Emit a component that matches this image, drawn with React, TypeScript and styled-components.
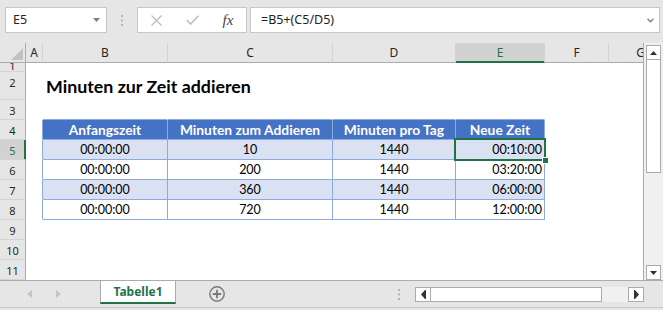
import React from 'react';
import styled, { createGlobalStyle } from 'styled-components';

const GREEN = '#217346';
const LINE = '#ababab';
const SOFT_LINE = '#d4d4d4';
const CHROME = '#e6e6e6';
const ACTIVE_HEAD = '#d2d2d2';
const TABLE_LINE = '#8ea9db';
const TABLE_HEAD = '#4472c4';
const TABLE_BAND = '#d9e1f2';

const COLUMNS = [
  { name: 'A', width: 17 },
  { name: 'B', width: 125 },
  { name: 'C', width: 165 },
  { name: 'D', width: 123 },
  { name: 'E', width: 89 },
  { name: 'F', width: 64 },
  { name: 'G', width: 64 },
];

const HEADINGS = ['Anfangszeit', 'Minuten zum Addieren', 'Minuten pro Tag', 'Neue Zeit'];

const DATA = [
  ['00:00:00', '10', '1440', '00:10:00'],
  ['00:00:00', '200', '1440', '03:20:00'],
  ['00:00:00', '360', '1440', '06:00:00'],
  ['00:00:00', '720', '1440', '12:00:00'],
];

const ROWS = [1, 2, 3, 4, 5, 6, 7, 8, 9, 10, 11].map(n => ({
  n,
  height: n === 1 ? 9 : n === 2 ? 28 : 20,
}));

type Kind = 'blank' | 'head' | 'band' | 'plain';

const inTable = (n: number) => n >= 4 && n <= 8;

function cellKind(n: number, col: number): Kind {
  if (col < 1 || col > 4 || !inTable(n)) return 'blank';
  if (n === 4) return 'head';
  return n % 2 === 1 ? 'band' : 'plain';
}

const GlobalStyle = createGlobalStyle`
  html, body {
    margin: 0;
    padding: 0;
    background: ${CHROME};
  }

  body {
    font-family: 'Noto Sans', sans-serif;
  }
`;

export default function App() {
  return (
    <>
      <GlobalStyle />
      <Frame>
        <FormulaBar>
          <NameBox>
            <span>E5</span>
            <svg width="7" height="4" viewBox="0 0 7 4">
              <path d="M0 0h7L3.5 4z" fill="#7f7f7f" />
            </svg>
          </NameBox>
          <Grip>
            <svg width="2" height="11" viewBox="0 0 2 11" fill="#b4b4b4">
              <rect x="0" y="0" width="2" height="2" />
              <rect x="0" y="4.5" width="2" height="2" />
              <rect x="0" y="9" width="2" height="2" />
            </svg>
          </Grip>
          <FxBox>
            <FxSlot>
              <svg width="11" height="11" viewBox="0 0 11 11" stroke="#bdbdbd" strokeWidth="1.3">
                <path d="M0.5 0.5l10 10M10.5 0.5l-10 10" />
              </svg>
            </FxSlot>
            <FxSlot>
              <svg width="13" height="10" viewBox="0 0 13 10" fill="none" stroke="#bdbdbd" strokeWidth="1.6">
                <path d="M0.6 5l4 4L12.4 0.8" />
              </svg>
            </FxSlot>
            <FxSlot>
              <FxGlyph>fx</FxGlyph>
            </FxSlot>
          </FxBox>
          <FormulaInput>
            <span>=B5+(C5/D5)</span>
            <svg width="7" height="5" viewBox="0 0 7 5" fill="none" stroke="#7f7f7f" strokeWidth="1.4">
              <path d="M0.5 0.8l3 3 3-3" />
            </svg>
          </FormulaInput>
        </FormulaBar>

        <Workspace>
          <Sheet>
            <HeaderRow>
              <Corner>
                <svg width="12" height="12" viewBox="0 0 12 12">
                  <path d="M12 0v12H0z" fill="#c2c2c2" />
                </svg>
              </Corner>
              {COLUMNS.map(c => (
                <ColHead key={c.name} $w={c.width} $active={c.name === 'E'}>
                  {c.name}
                </ColHead>
              ))}
            </HeaderRow>

            {ROWS.map(row => (
              <SheetRow key={row.n} $h={row.height}>
                <RowHead $active={row.n === 5}>
                  <RowLabel $clipped={row.n === 1}>{row.n}</RowLabel>
                </RowHead>
                {COLUMNS.map((c, ci) => {
                  const kind = cellKind(row.n, ci);
                  const right =
                    kind !== 'blank' || (ci === 0 && inTable(row.n)) ? TABLE_LINE : 'transparent';
                  const bottom =
                    kind !== 'blank' || (row.n === 3 && ci >= 1 && ci <= 4)
                      ? TABLE_LINE
                      : 'transparent';
                  const isData = kind === 'band' || kind === 'plain';
                  const isTitle = row.n === 2 && ci === 1;
                  const selected = row.n === 5 && c.name === 'E';
                  let align = 'center';
                  if (isTitle) align = 'flex-start';
                  if (isData && ci === 4) align = 'flex-end';

                  return (
                    <Cell
                      key={c.name}
                      $w={c.width}
                      $h={row.height}
                      $kind={kind}
                      $right={right}
                      $bottom={bottom}
                      $align={align}
                    >
                      {isTitle && <Title>Minuten zur Zeit addieren</Title>}
                      {kind === 'head' && <span>{HEADINGS[ci - 1]}</span>}
                      {isData && <span>{DATA[row.n - 5][ci - 1]}</span>}
                      {selected && (
                        <Selection>
                          <Handle />
                        </Selection>
                      )}
                    </Cell>
                  );
                })}
              </SheetRow>
            ))}
          </Sheet>

          <VScroll>
            <ScrollButton>
              <svg width="7" height="4" viewBox="0 0 7 4">
                <path d="M0 4h7L3.5 0z" fill="#333" />
              </svg>
            </ScrollButton>
            <VThumb />
            <ScrollTrack />
            <ScrollButton>
              <svg width="7" height="4" viewBox="0 0 7 4">
                <path d="M0 0h7L3.5 4z" fill="#333" />
              </svg>
            </ScrollButton>
          </VScroll>
        </Workspace>

        <TabBar>
          <SheetNav>
            <svg width="5" height="8" viewBox="0 0 5 8">
              <path d="M5 0v8L0 4z" fill="#c4c4c4" />
            </svg>
            <svg width="5" height="8" viewBox="0 0 5 8">
              <path d="M0 0v8l5-4z" fill="#c4c4c4" />
            </svg>
          </SheetNav>
          <SheetTab>Tabelle1</SheetTab>
          <AddSheet>
            <svg width="16" height="16" viewBox="0 0 16 16" fill="none" stroke="#7a7a7a" strokeWidth="1.4">
              <circle cx="8" cy="8" r="7.2" />
              <path d="M8 3.8v8.4M3.8 8h8.4" strokeWidth="1.8" />
            </svg>
          </AddSheet>
          <TabSpacer />
          <TabGrip>
            <svg width="2" height="11" viewBox="0 0 2 11" fill="#b4b4b4">
              <rect x="0" y="0" width="2" height="2" />
              <rect x="0" y="4.5" width="2" height="2" />
              <rect x="0" y="9" width="2" height="2" />
            </svg>
          </TabGrip>
          <HScroll>
            <HButton>
              <svg width="5" height="9" viewBox="0 0 5 9">
                <path d="M4 0v9L0 4.5z" fill="#333" />
                <rect x="4" y="0" width="1" height="9" fill="#333" />
              </svg>
            </HButton>
            <HThumb />
            <ScrollTrack />
            <HButton>
              <svg width="5" height="9" viewBox="0 0 5 9">
                <path d="M1 0v9l4-4.5z" fill="#333" />
                <rect x="0" y="0" width="1" height="9" fill="#333" />
              </svg>
            </HButton>
          </HScroll>
        </TabBar>
      </Frame>
    </>
  );
}

const Frame = styled.div`
  width: 663px;
  height: 310px;
  display: flex;
  flex-direction: column;
  overflow: hidden;
  background: ${CHROME};
  font-family: 'Noto Sans', sans-serif;
  color: #262626;
`;

/* formula bar */

const FormulaBar = styled.div`
  flex: none;
  height: 43px;
  box-sizing: border-box;
  padding: 7px 3px 0 5px;
  display: flex;
  align-items: flex-start;
`;

const Field = styled.div`
  height: 26px;
  box-sizing: border-box;
  display: flex;
  align-items: center;
  background: #fff;
  border: 1px solid #c6c6c6;
  font-size: 12.5px;
  line-height: 24px;
  color: #222;
`;

const NameBox = styled(Field)`
  width: 102px;
  padding: 0 6px 0 7px;
  justify-content: space-between;
`;

const Grip = styled.div`
  width: 30px;
  height: 26px;
  display: flex;
  align-items: center;
  justify-content: center;
`;

const FxBox = styled(Field)`
  width: 110px;
`;

const FxSlot = styled.div`
  width: 36px;
  height: 100%;
  display: flex;
  align-items: center;
  justify-content: center;
`;

const FxGlyph = styled.span`
  font-family: 'Liberation Serif', serif;
  font-style: italic;
  font-size: 15px;
  color: #444;
`;

const FormulaInput = styled(Field)`
  flex: 1;
  margin-left: 3px;
  padding: 0 5px 0 10px;
  justify-content: space-between;
`;

/* sheet */

const Workspace = styled.div`
  flex: none;
  height: 237px;
  display: flex;
`;

const Sheet = styled.div`
  width: 644px;
  box-sizing: border-box;
  border-right: 1px solid ${LINE};
  overflow: hidden;
  background: #fff;
`;

const HeaderRow = styled.div`
  display: flex;
  height: 20px;
`;

const Corner = styled.div`
  flex: none;
  width: 26px;
  box-sizing: border-box;
  padding: 0 2px 2px 0;
  display: flex;
  justify-content: flex-end;
  align-items: flex-end;
  background: ${CHROME};
  border-right: 1px solid ${LINE};
  border-bottom: 1px solid ${LINE};
`;

const ColHead = styled.div<{ $w: number; $active?: boolean }>`
  flex: none;
  width: ${p => p.$w}px;
  box-sizing: border-box;
  background: ${p => (p.$active ? ACTIVE_HEAD : CHROME)};
  border-right: 1px solid ${SOFT_LINE};
  border-bottom: 1px solid ${p => (p.$active ? GREEN : LINE)};
  box-shadow: ${p => (p.$active ? `inset 0 -1px 0 ${GREEN}` : 'none')};
  color: ${p => (p.$active ? GREEN : '#262626')};
  font-size: 12px;
  line-height: 19px;
  text-align: center;
`;

const SheetRow = styled.div<{ $h: number }>`
  display: flex;
  height: ${p => p.$h}px;
`;

const RowHead = styled.div<{ $active?: boolean }>`
  flex: none;
  width: 26px;
  box-sizing: border-box;
  overflow: hidden;
  background: ${p => (p.$active ? ACTIVE_HEAD : CHROME)};
  border-right: 1px solid ${p => (p.$active ? GREEN : LINE)};
  border-bottom: 1px solid ${SOFT_LINE};
  box-shadow: ${p => (p.$active ? `inset -1px 0 0 ${GREEN}` : 'none')};
  color: ${p => (p.$active ? GREEN : '#262626')};
  font-size: 11px;
  text-align: center;
`;

const RowLabel = styled.div<{ $clipped?: boolean }>`
  padding-top: 2px;
  margin-top: ${p => (p.$clipped ? -8 : 0)}px;
  line-height: 17px;
`;

const Cell = styled.div<{
  $w: number;
  $h: number;
  $kind: Kind;
  $right: string;
  $bottom: string;
  $align: string;
}>`
  flex: none;
  position: relative;
  width: ${p => p.$w}px;
  height: ${p => p.$h}px;
  box-sizing: border-box;
  padding: 0 2px;
  display: flex;
  justify-content: ${p => p.$align};
  align-items: flex-end;
  border-right: 1px solid ${p => p.$right};
  border-bottom: 1px solid ${p => p.$bottom};
  background: ${p =>
    p.$kind === 'head' ? TABLE_HEAD : p.$kind === 'band' ? TABLE_BAND : p.$kind === 'plain' ? '#fff' : 'transparent'};
  color: ${p => (p.$kind === 'head' ? '#fff' : '#000')};
  font-family: Lato, 'Liberation Sans', sans-serif;
  font-size: ${p => (p.$kind === 'head' ? 13.8 : 12.5)}px;
  font-weight: ${p => (p.$kind === 'head' ? 700 : 400)};
  line-height: ${p => p.$h - 1}px;
  white-space: nowrap;
`;

const Title = styled.span`
  padding: 0 0 2px 1px;
  font-size: 17.8px;
  font-weight: 700;
  line-height: 21px;
`;

const Selection = styled.div`
  position: absolute;
  left: -2px;
  top: -2px;
  z-index: 2;
  width: 92px;
  height: 23px;
  box-sizing: border-box;
  border: 2px solid ${GREEN};
`;

const Handle = styled.div`
  position: absolute;
  left: 86px;
  top: 17px;
  width: 7px;
  height: 7px;
  box-sizing: border-box;
  background: ${GREEN};
  border: 1px solid #fff;
`;

/* scrollbars */

const VScroll = styled.div`
  flex: none;
  width: 19px;
  box-sizing: border-box;
  padding: 2px 2px 0;
  display: flex;
  flex-direction: column;
  background: #f0f0f0;
`;

const ScrollButton = styled.div`
  flex: none;
  width: 15px;
  height: 15px;
  box-sizing: border-box;
  display: flex;
  align-items: center;
  justify-content: center;
  background: #fff;
  border: 1px solid ${LINE};
`;

const VThumb = styled.div`
  flex: none;
  height: 112px;
  background: #fff;
  border: 1px solid ${LINE};
  border-top: none;
`;

const ScrollTrack = styled.div`
  flex: 1;
  background: #f0f0f0;
`;

const HScroll = styled.div`
  flex: none;
  width: 229px;
  height: 15px;
  margin: 6px 19px 0 0;
  display: flex;
`;

const HButton = styled(ScrollButton)`
  width: 16px;
`;

const HThumb = styled.div`
  flex: none;
  width: 170px;
  background: #fff;
  border: 1px solid ${LINE};
  border-left: none;
`;

/* sheet tabs */

const TabBar = styled.div`
  flex: none;
  height: 28px;
  box-sizing: border-box;
  display: flex;
  align-items: flex-start;
  border-top: 1px solid ${LINE};
  border-bottom: 1px solid #c6c6c6;
`;

const SheetNav = styled.div`
  flex: none;
  width: 100px;
  height: 26px;
  box-sizing: border-box;
  padding-left: 27px;
  display: flex;
  align-items: center;
  gap: 24px;
`;

const SheetTab = styled.div`
  flex: none;
  width: 76px;
  height: 23px;
  box-sizing: border-box;
  padding-top: 1px;
  background: #fff;
  border-left: 1px solid ${LINE};
  border-right: 1px solid ${LINE};
  border-bottom: 2px solid ${GREEN};
  color: ${GREEN};
  font-size: 12px;
  font-weight: 700;
  line-height: 20px;
  text-align: center;
`;

const AddSheet = styled.div`
  flex: none;
  margin: 5px 0 0 33px;
  height: 16px;
  display: flex;
`;

const TabSpacer = styled.div`
  flex: 1;
`;

const TabGrip = styled.div`
  flex: none;
  margin: 8px 15px 0 0;
  display: flex;
`;
